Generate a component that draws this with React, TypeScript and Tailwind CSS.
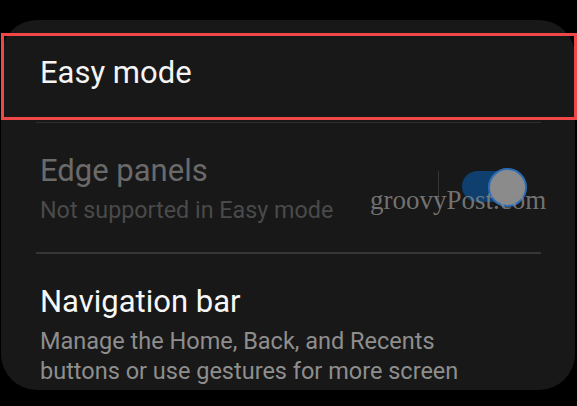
export default function App() {
  return (
    <div
      className="w-[577px] h-[406px] bg-black overflow-hidden"
      style={{ fontFamily: "Roboto, 'Noto Sans', sans-serif" }}
    >
      <div className="relative pt-[20px]">
        {/* Settings card */}
        <div className="ml-[1px] w-[574px] h-[370px] rounded-[36px] bg-[#181818] overflow-hidden">
          {/* Easy mode */}
          <div className="pl-[39px] pt-[35px] pb-[31px]">
            <h2 className="text-[31px] leading-[36px] text-[#f4f4f4]">Easy mode</h2>
          </div>
          <div className="ml-[35px] w-[505px] h-px bg-[#2f2f2f]" />

          {/* Edge panels (disabled) */}
          <div className="flex items-center pl-[39px] pr-[48px] pt-[30px] pb-[27px]">
            <div className="flex-1 flex flex-col gap-[6px]">
              <h2 className="text-[31px] leading-[36px] text-[#6a6a6a]">Edge panels</h2>
              <p className="text-[23.3px] leading-[30px] text-[#4a4a4a]">
                Not supported in Easy mode
              </p>
            </div>
            <div className="flex items-center -mt-[4px]">
              <div className="w-px h-[33px] bg-[#363636] mr-[23px]" />
              <div className="relative w-[65px] h-[39px]">
                <div className="absolute left-0 top-[3px] w-[53px] h-[31px] rounded-full bg-[#0e3f6e]" />
                <div className="absolute right-0 top-0 w-[39px] h-[39px] rounded-full bg-[#8b8b8b] border-2 border-[#2d6db6]" />
              </div>
            </div>
          </div>
          <div className="ml-[35px] w-[505px] h-[2px] bg-[#363636]" />

          {/* Navigation bar */}
          <div className="pl-[39px] pr-[40px] pt-[30px] flex flex-col gap-[6px]">
            <h2 className="text-[31px] leading-[36px] text-[#f7f7f7]">Navigation bar</h2>
            <p className="text-[23.5px] leading-[30px] text-[#8e8e8e]">
              Manage the Home, Back, and Recents
              <br />
              buttons or use gestures for more screen
            </p>
          </div>
        </div>

        {/* Highlight annotation */}
        <div className="absolute left-[1px] top-[33px] w-[576px] h-[87px] border-[3px] border-[#f04848]" />

        {/* Watermark */}
        <div
          className="absolute left-[370px] top-[187px] text-[27px] leading-[27px] text-[#8a8a8a]/80"
          style={{ fontFamily: "'Liberation Serif', serif" }}
        >
          groovyPost.com
        </div>
      </div>
    </div>
  );
}
